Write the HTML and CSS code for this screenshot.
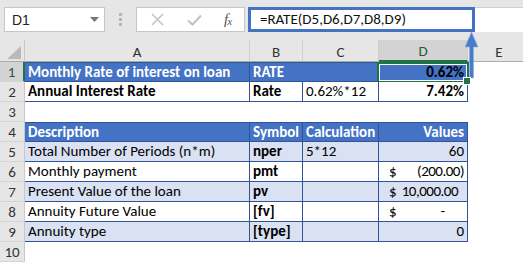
FILE: index.html
```html
<!DOCTYPE html>
<html>
<head>
<meta charset="utf-8">
<link rel="stylesheet" href="styles.css">
</head>
<body>
<div class="app">
  <div class="topbar">
    <div class="namebox">
      <span class="nb-text">D1</span>
      <svg class="nb-caret" width="9" height="5" viewBox="0 0 9 5"><path d="M0 0h9L4.5 5z" fill="#777"/></svg>
    </div>
    <div class="sep">
      <svg width="3" height="13" viewBox="0 0 3 13"><rect x="0" y="0" width="3" height="3" fill="#B5B5B5"/><rect x="0" y="5" width="3" height="3" fill="#B5B5B5"/><rect x="0" y="10" width="3" height="3" fill="#B5B5B5"/></svg>
    </div>
    <div class="fxbox">
      <svg class="ico-x" width="13" height="13" viewBox="0 0 13 13"><path d="M1 1L12 12M12 1L1 12" stroke="#C4C4C4" stroke-width="1.6" fill="none"/></svg>
      <svg class="ico-ok" width="15" height="12" viewBox="0 0 15 12"><path d="M1 6.5L5.5 10.5L14 1.5" stroke="#C4C4C4" stroke-width="2.2" fill="none"/></svg>
      <span class="fx">f<sub>x</sub></span>
    </div>
    <div class="formula">=RATE(D5,D6,D7,D8,D9)</div>
    <div class="rest"></div>
  </div>

  <div class="sheet">
    <div class="corner"><svg width="14" height="13" viewBox="0 0 14 13"><path d="M14 0V13H0z" fill="#B9B9B9"/></svg></div>
    <div class="colh">A</div>
    <div class="colh">B</div>
    <div class="colh">C</div>
    <div class="colh sel">D</div>
    <div class="colh last">E</div>

    <div class="rowh sel">1</div>
    <div class="c hd b top">Monthly Rate of interest on loan</div>
    <div class="c hd b top nor">RATE</div>
    <div class="c hd top"></div>
    <div class="c hd b top r dark active">0.62%</div>
    <div class="e"></div>

    <div class="rowh">2</div>
    <div class="c w b">Annual Interest Rate</div>
    <div class="c w b">Rate</div>
    <div class="c w">0.62%*12</div>
    <div class="c w b r">7.42%</div>
    <div class="e"></div>

    <div class="rowh">3</div>
    <div class="e span5"></div>

    <div class="rowh">4</div>
    <div class="c hd b top">Description</div>
    <div class="c hd b top">Symbol</div>
    <div class="c hd b top">Calculation</div>
    <div class="c hd b top r">Values</div>
    <div class="e"></div>

    <div class="rowh">5</div>
    <div class="c lt">Total Number of Periods (n*m)</div>
    <div class="c lt b">nper</div>
    <div class="c lt">5*12</div>
    <div class="c lt r">60</div>
    <div class="e"></div>

    <div class="rowh">6</div>
    <div class="c w">Monthly payment</div>
    <div class="c w b">pmt</div>
    <div class="c w"></div>
    <div class="c w acc"><span>$</span><span class="num">(200.00)</span></div>
    <div class="e"></div>

    <div class="rowh">7</div>
    <div class="c lt">Present Value of the loan</div>
    <div class="c lt b">pv</div>
    <div class="c lt"></div>
    <div class="c lt acc pos"><span>$</span><span class="num">10,000.00</span></div>
    <div class="e"></div>

    <div class="rowh">8</div>
    <div class="c w">Annuity Future Value</div>
    <div class="c w b">[fv]</div>
    <div class="c w"></div>
    <div class="c w acc dash"><span>$</span><span>-</span></div>
    <div class="e"></div>

    <div class="rowh">9</div>
    <div class="c lt">Annuity type</div>
    <div class="c lt b">[type]</div>
    <div class="c lt"></div>
    <div class="c lt r">0</div>
    <div class="e"></div>

    <div class="rowh">10</div>
    <div class="e span5"></div>
  </div>

  <svg class="arrow" width="15" height="47" viewBox="0 0 15 47">
    <path d="M7.5 0L14 15H9.5V46H5.5V15H1z" fill="#4A7BCB" stroke="#8FB0E3" stroke-width="0.6"/>
  </svg>
</div>
</body>
</html>
```

FILE: styles.css
```css
* { box-sizing: border-box; }
html, body { margin: 0; padding: 0; }
body {
  width: 523px;
  height: 262px;
  overflow: hidden;
  background: #ffffff;
  font-family: "Carlito", "Lato", "Liberation Sans", sans-serif;
}
.app {
  position: relative;
  width: 523px;
  height: 262px;
  overflow: hidden;
}
.topbar {
  height: 40px;
  background: #E6E6E6;
  display: flex;
  align-items: flex-start;
  padding-top: 7px;
}
.namebox {
  margin-left: 4px;
  width: 101px;
  height: 25px;
  background: #fff;
  border: 1px solid #C6C6C6;
  display: flex;
  align-items: center;
  justify-content: space-between;
  padding: 0 5px 0 7px;
  font-family: "Liberation Sans", sans-serif;
  font-size: 14px;
  color: #222;
}
.sep {
  width: 31px;
  height: 25px;
  display: flex;
  align-items: center;
  justify-content: center;
}
.fxbox {
  width: 109px;
  height: 25px;
  background: #fff;
  border: 1px solid #C6C6C6;
  display: flex;
  align-items: center;
  padding-left: 14px;
}
.ico-x { margin-right: 23px; }
.ico-ok { margin-right: 22px; }
.fx {
  font-family: "Liberation Serif", serif;
  font-style: italic;
  font-size: 15px;
  color: #555;
  letter-spacing: -1px;
}
.fx sub { font-size: 11px; vertical-align: -1px; }
.formula {
  margin-left: 3px;
  width: 227px;
  height: 25px;
  border: 3px solid #4472C4;
  background: #fff;
  padding-left: 9px;
  font-size: 15px;
  line-height: 19px;
  color: #111;
}
.rest {
  flex: 1;
  height: 25px;
  background: #fff;
  border-top: 1px solid #D0D0D0;
}
.sheet {
  display: grid;
  grid-template-columns: 25px 225px 53px 76px 89px 62px;
  grid-template-rows: 22px repeat(10, 20px);
  font-size: 15px;
}
.corner {
  background: #E6E6E6;
  border-right: 1px solid #C8C8C8;
  border-bottom: 1px solid #ABABAB;
  display: flex;
  align-items: flex-end;
  justify-content: flex-end;
  padding: 0 3px 2px 0;
}
.colh {
  background: #E6E6E6;
  border-right: 1px solid #CFCFCF;
  border-bottom: 1px solid #ABABAB;
  display: flex;
  align-items: center;
  justify-content: center;
  color: #333;
  font-size: 15px;
  padding-top: 2px;
}
.colh.sel {
  background: #D3D3D3;
  border-bottom: 2px solid #217346;
  color: #1E5E3A;
}
.colh.last { border-right: none; }
.rowh {
  background: #E6E6E6;
  border-right: 1px solid #C8C8C8;
  border-bottom: 1px solid #D4D4D4;
  display: flex;
  align-items: flex-end;
  justify-content: center;
  color: #333;
  font-size: 15px;
  line-height: 18px;
}
.rowh.sel {
  background: #D3D3D3;
  border-right: 2px solid #217346;
  color: #1E5E3A;
}
.e { background: #fff; }
.span5 { grid-column: span 5; }
.c {
  position: relative;
  display: flex;
  align-items: flex-end;
  padding: 0 3px 0 3px;
  line-height: 19px;
  white-space: nowrap;
  border-right: 1px solid #2F5597;
  border-bottom: 1px solid #2F5597;
  color: #000;
}
.c.top { border-top: 1px solid #2F5597; line-height: 18px; }
.c.nor { border-right: none; }
.hd { background: #4472C4; color: #fff; }
.hd.dark { color: #000; }
.lt { background: #D9E1F2; }
.w { background: #fff; }
.b { font-weight: bold; }
.r { justify-content: flex-end; }
.acc {
  justify-content: space-between;
  padding-left: 10px;
  padding-right: 3px;
}
.acc .num { letter-spacing: -0.5px; }
.acc.pos { padding-right: 9px; }
.acc.dash { padding-right: 22px; }
.active::after {
  content: "";
  position: absolute;
  left: -2px;
  top: -1px;
  right: -2px;
  bottom: -2px;
  border: 2px solid #217346;
  box-shadow: inset 0 0 0 1px #fff;
}
.active::before {
  content: "";
  position: absolute;
  right: -4px;
  bottom: -4px;
  width: 6px;
  height: 6px;
  background: #217346;
  border: 1px solid #fff;
  z-index: 2;
}
.arrow {
  position: absolute;
  left: 464px;
  top: 32px;
}
```
